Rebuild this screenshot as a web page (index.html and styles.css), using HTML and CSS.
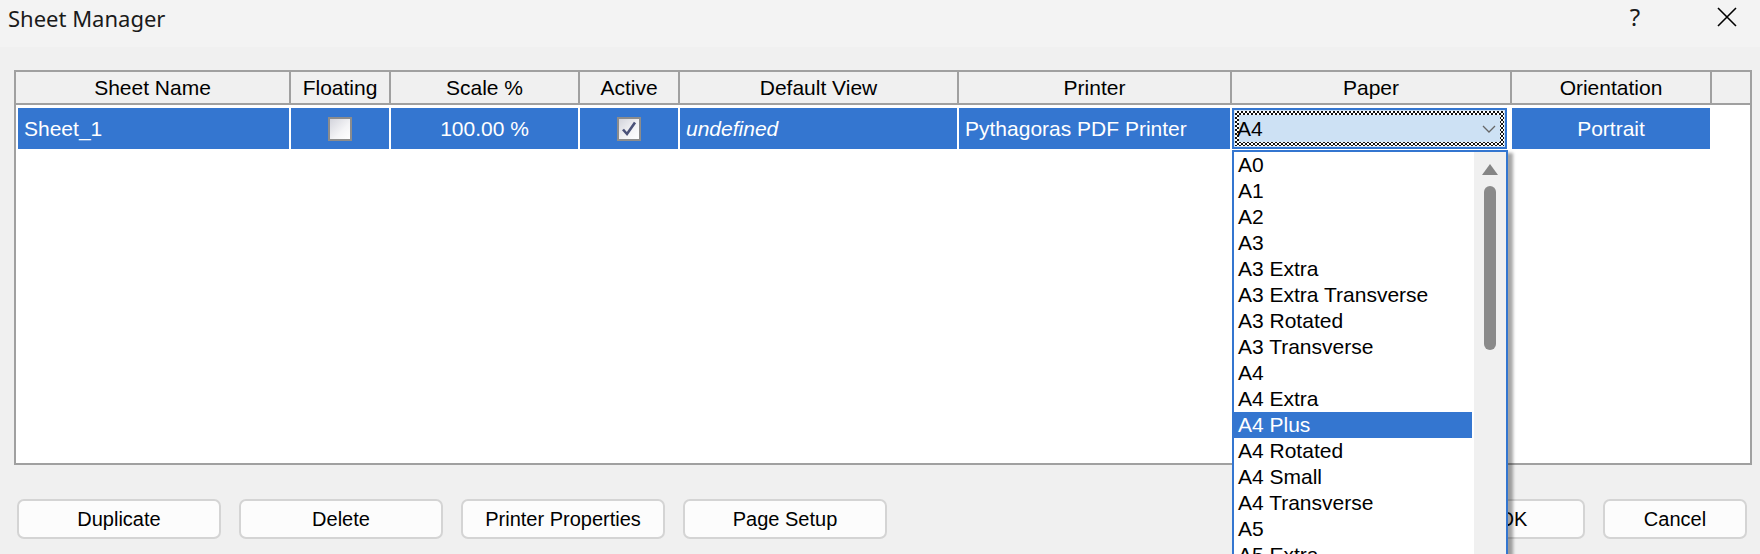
FILE: index.html
```html
<!DOCTYPE html>
<html>
<head>
<meta charset="utf-8">
<link rel="stylesheet" href="styles.css">
</head>
<body>
<div class="titlebar">
  <span class="title">Sheet Manager</span>
  <div class="tb-btns">
    <span class="help">?</span>
    <span class="close"><svg width="20" height="20" viewBox="0 0 20 20"><path d="M1 1 L19 19 M19 1 L1 19" stroke="#000" stroke-width="1.6" fill="none"/></svg></span>
  </div>
</div>
<div class="content">
  <div class="table">
    <div class="grid head">
      <div class="th">Sheet Name</div>
      <div class="th">Floating</div>
      <div class="th">Scale %</div>
      <div class="th">Active</div>
      <div class="th">Default View</div>
      <div class="th">Printer</div>
      <div class="th">Paper</div>
      <div class="th">Orientation</div>
      <div class="th filler"></div>
    </div>
    <div class="grid row">
      <div class="td first">Sheet_1</div>
      <div class="td center"><span class="chk"></span></div>
      <div class="td center">100.00 %</div>
      <div class="td center"><span class="chk"><svg width="20" height="20" viewBox="0 0 20 20"><path d="M4 10.5 L8 15 L16 3.5" stroke="#4b5278" stroke-width="2.6" fill="none"/></svg></span></div>
      <div class="td italic">undefined</div>
      <div class="td">Pythagoras PDF Printer</div>
      <div class="td paper">
        <div class="combo">
          <div class="focus">
            <div class="combo-inner"><span>A4</span><svg width="14" height="8" viewBox="0 0 14 8"><path d="M1 1 L7 7 L13 1" stroke="#666" stroke-width="1.3" fill="none"/></svg></div>
          </div>
        </div>
        <div class="list">
          <div class="items">
            <div class="item">A0</div>
            <div class="item">A1</div>
            <div class="item">A2</div>
            <div class="item">A3</div>
            <div class="item">A3 Extra</div>
            <div class="item">A3 Extra Transverse</div>
            <div class="item">A3 Rotated</div>
            <div class="item">A3 Transverse</div>
            <div class="item">A4</div>
            <div class="item">A4 Extra</div>
            <div class="item sel">A4 Plus</div>
            <div class="item">A4 Rotated</div>
            <div class="item">A4 Small</div>
            <div class="item">A4 Transverse</div>
            <div class="item">A5</div>
            <div class="item">A5 Extra</div>
          </div>
          <div class="scroll">
            <div class="arrow"></div>
            <div class="thumb"></div>
          </div>
        </div>
      </div>
      <div class="td center">Portrait</div>
    </div>
  </div>
  <div class="buttons">
    <div class="group">
      <div class="btn wide">Duplicate</div>
      <div class="btn wide">Delete</div>
      <div class="btn wide">Printer Properties</div>
      <div class="btn wide">Page Setup</div>
    </div>
    <div class="group">
      <div class="btn narrow">OK</div>
      <div class="btn narrow">Cancel</div>
    </div>
  </div>
</div>
</body>
</html>
```

FILE: styles.css
```css
* { box-sizing: border-box; }
html, body { margin: 0; padding: 0; }
body {
  width: 1760px;
  height: 554px;
  overflow: hidden;
  background: #f0f0f0;
  font-family: "Liberation Sans", Arial, sans-serif;
  color: #000;
}
.titlebar {
  height: 47px;
  background: #f3f3f3;
  display: flex;
  justify-content: space-between;
  align-items: flex-start;
}
.title {
  font-family: "Noto Sans", "Open Sans", sans-serif;
  font-size: 22px;
  line-height: 36px;
  padding-left: 8px;
  color: #1a1a1a;
}
.tb-btns { display: flex; gap: 13px; }
.help {
  width: 92px;
  text-align: center;
  font-family: "Noto Sans", sans-serif;
  font-size: 24px;
  line-height: 34px;
  color: #1a1a1a;
}
.close {
  width: 66px;
  height: 34px;
  display: flex;
  align-items: center;
  justify-content: center;
}
.content { padding: 23px 0 0 14px; }
.table {
  width: 1738px;
  height: 395px;
  border: 2px solid #a0a0a0;
  background: #fff;
}
.grid {
  display: grid;
  grid-template-columns: 275px 100px 189px 100px 279px 273px 280px 200px 1fr;
}
.th {
  height: 33px;
  background: #f0f0f0;
  border-right: 2px solid #a0a0a0;
  border-bottom: 2px solid #a0a0a0;
  text-align: center;
  font-size: 21px;
  line-height: 31px;
}
.th.filler { border-right: 0; }
.row { margin-top: 3px; height: 41px; }
.td {
  background: #3476d0;
  border-right: 2px solid #fff;
  color: #fff;
  font-size: 21px;
  line-height: 41px;
  padding-left: 6px;
  white-space: nowrap;
}
.td.first { margin-left: 2px; }
.td.center {
  padding-left: 0;
  display: flex;
  align-items: center;
  justify-content: center;
}
.td.italic { font-style: italic; }
.chk {
  width: 24px;
  height: 24px;
  border: 2px solid #8c8c8c;
  background: linear-gradient(135deg, #d3d4dc 0%, #f4f4f6 60%, #ffffff 100%);
  display: flex;
  align-items: center;
  justify-content: center;
}
.td.paper {
  background: #fff;
  padding: 0;
  position: relative;
}
.combo {
  width: 275px;
  height: 41px;
  border: 2px solid #3476d0;
  padding: 1px;
  background: #cde1f4;
}
.focus {
  height: 100%;
  padding: 4px;
  background: repeating-conic-gradient(#111 0% 25%, #fff 0% 50%) 0 0 / 4px 4px;
}
.combo-inner {
  height: 100%;
  background: #cde1f4;
  display: flex;
  align-items: center;
  justify-content: space-between;
  color: #000;
  font-size: 21px;
  line-height: 26px;
  padding-right: 4px;
}
.combo-inner span { margin-left: -2px; }
.list {
  position: absolute;
  left: 0;
  top: 42px;
  width: 276px;
  height: 420px;
  border: 2px solid #3476d0;
  background: #fff;
  display: flex;
  box-shadow: 5px 3px 3px rgba(0, 0, 0, 0.35);
  z-index: 5;
}
.items { flex: 1; }
.item {
  height: 26px;
  line-height: 26px;
  padding-left: 4px;
  font-size: 21px;
  color: #000;
}
.item.sel {
  background: #3476d0;
  color: #fff;
  margin-right: 2px;
  margin-left: -1px;
  padding-left: 5px;
}
.scroll {
  width: 32px;
  background: #f0f0f0;
  display: flex;
  flex-direction: column;
  align-items: center;
  padding-top: 12px;
}
.arrow {
  width: 0;
  height: 0;
  border-left: 8px solid transparent;
  border-right: 8px solid transparent;
  border-bottom: 11px solid #858585;
}
.thumb {
  margin-top: 11px;
  width: 12px;
  height: 164px;
  border-radius: 6px;
  background: #8a8a8a;
}
.buttons {
  display: flex;
  justify-content: space-between;
  margin: 34px 0 0 3px;
  width: 1730px;
}
.group { display: flex; gap: 18px; }
.btn {
  height: 40px;
  border: 2px solid #d4d4d4;
  border-radius: 7px;
  background: #fcfcfc;
  font-size: 20px;
  display: flex;
  align-items: center;
  justify-content: center;
  color: #000;
}
.btn.wide { width: 204px; }
.btn.narrow { width: 144px; }
```
